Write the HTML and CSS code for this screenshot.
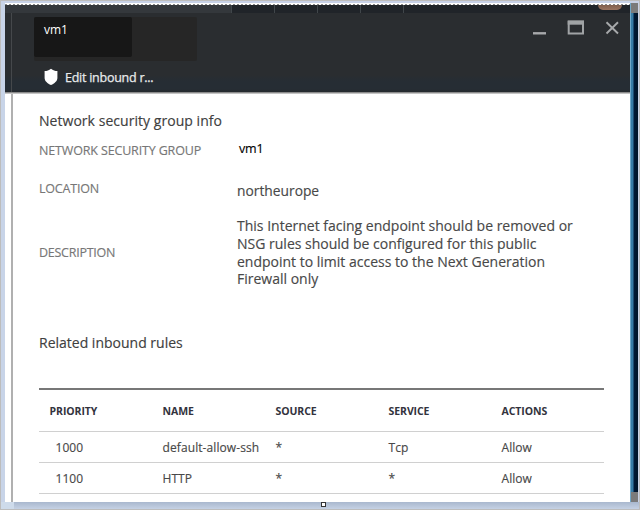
FILE: index.html
```html
<!DOCTYPE html>
<html lang="en">
<head>
<meta charset="utf-8">
<title>Network security group</title>
<link rel="stylesheet" href="styles.css">
</head>
<body>
<div class="window">
  <div class="rail-left"></div>
  <div class="blade">
    <div class="dots"></div>
    <header class="header">
      <div class="tabs"><i class="wide"></i><i></i><i></i><i></i><i></i></div>
      <div class="avatar"></div>
      <div class="title-row">
        <div class="title-box"><div class="title">vm1</div></div>
        <svg class="controls" width="90" height="20" viewBox="0 0 90 20">
          <path d="M1 14.3H14" stroke="#a7a9ab" stroke-width="2.4"/>
          <path d="M36.7 2.5H51V14.4H36.7Z" fill="none" stroke="#a0a3a5" stroke-width="2"/>
          <path d="M35.7 3.7H52" stroke="#a0a3a5" stroke-width="4"/>
          <path d="M74.5 3.3L86 14.5M86 3.3L74.5 14.5" stroke="#a7a9ab" stroke-width="1.9"/>
        </svg>
      </div>
      <div class="toolbar">
        <svg width="14" height="18" viewBox="0 0 14 18"><path d="M7 .7C9 2.2 11 3 13.4 3.1V10C13.4 13 10.5 15.5 7 17C3.5 15.5.6 13 .6 10V3.1C3 3 5 2.2 7 .7Z" fill="#fff"/></svg>
        <span>Edit inbound r...</span>
      </div>
    </header>
    <main class="content">
      <h2 class="info">Network security group info</h2>
      <div class="row first"><span class="label">NETWORK SECURITY GROUP</span><span class="vm">vm1</span></div>
      <div class="row second"><span class="label">LOCATION</span><span class="value">northeurope</span></div>
      <div class="row third"><span class="label short">DESCRIPTION</span>
        <p class="value">This Internet facing endpoint should be removed or<br>NSG rules should be configured for this public<br>endpoint to limit access to the Next Generation<br>Firewall only</p></div>
      <h2 class="rules">Related inbound rules</h2>
      <div class="table">
        <div class="tr th"><span>PRIORITY</span><span>NAME</span><span>SOURCE</span><span>SERVICE</span><span>ACTIONS</span></div>
        <div class="tr"><span class="num">1000</span><span class="ssh">default-allow-ssh</span><span>*</span><span>Tcp</span><span>Allow</span></div>
        <div class="tr"><span class="num">1100</span><span>HTTP</span><span>*</span><span>*</span><span>Allow</span></div>
      </div>
    </main>
  </div>
  <div class="rail-right"><i></i><i></i></div>
  <div class="bottom"><span class="handle"></span></div>
</div>
</body>
</html>
```
FILE: styles.css
```css
* { box-sizing: border-box; }
body { margin: 0; background: #bfbfbf; font-family: "Open Sans", "Noto Sans", sans-serif; color: #484848; }
.window { width: 640px; height: 510px; border: 1px solid #bdbdbd; display: grid; grid-template-columns: 4px 625px 8px 1fr; grid-template-rows: 2px 499px 1fr; background: #c8d2e7; overflow: hidden; }
.rail-left { grid-area: 2 / 1; background: #c8d4e8; }
.blade { grid-area: 2 / 2; background: #fff; position: relative; }
.blade::after { content: ""; position: absolute; left: 6px; top: 91px; bottom: 0; width: 2px; background: #b0b0b0; }
.dots { height: 2px; background: repeating-linear-gradient(90deg, #888 0 2px, #fff 2px 4px) bottom / 100% 1px no-repeat; }
.header { height: 89px; background: linear-gradient(#2a2d30 0 70px, #262d34 76px 84px, #252a2e 87px, #8b8b8b 87px 88px, #c4c4c4 88px); position: relative; }
.header::before { content: ""; position: absolute; left: 6px; top: 8px; width: 1px; height: 79px; background: #45484b; }
.tabs { display: flex; height: 8px; background: #202429; }
.tabs i { width: 43px; border-right: 1px solid #40464a; }
.tabs .wide { width: 227px; background: #34383c; }
.avatar { position: absolute; right: 8px; top: 0; width: 24px; height: 5px; background: linear-gradient(#80604f, #99735f); border-radius: 0 0 12px 12px; }
.title-row { display: flex; justify-content: space-between; padding: 4px 8px 0 29px; height: 49px; }
.title-box { width: 163px; height: 44px; background: #262626; border-radius: 2px; }
.title { width: 98px; height: 40px; background: #171717; border-radius: 2px; padding: 4px 0 0 10px; font-size: 12px; line-height: 18px; color: #fff; }
.controls { margin-top: 2px; }
.toolbar { display: flex; align-items: center; height: 20px; margin-top: 6px; padding-left: 39px; gap: 7px; font-size: 12.5px; line-height: 20px; letter-spacing: -.25px; color: #e8eaeb; -webkit-text-stroke: .25px #e8eaeb; }
.toolbar svg { margin-top: -2px; }
.content { padding: 17px 27px 0 34px; -webkit-text-stroke: .15px; }
h2 { margin: 0; font-size: 14px; line-height: 20px; font-weight: 400; color: #404040; white-space: nowrap; }
.info { letter-spacing: .04px; }
.row { display: grid; grid-template-columns: 198px 1fr; white-space: nowrap; }
.label { font-size: 12.5px; line-height: 20px; color: #777; letter-spacing: -.15px; }
.label.short { letter-spacing: -.25px; }
.value { margin: 0; font-size: 14px; line-height: 17.8px; color: #484848; }
.first { padding-top: 10px; height: 48px; }
.second { height: 38px; }
.second .label { letter-spacing: -.2px; }
.second .value { padding-top: 3px; font-size: 13.8px; }
.third { height: 71px; align-items: center; }
.vm { font-size: 12.5px; line-height: 16px; color: #000; padding-left: 2px; letter-spacing: -.2px; }
.rules { margin-top: 45px; }
.table { margin-top: 35px; border-top: 2px solid #777; width: 565px; }
.tr { display: grid; grid-template-columns: repeat(5, 113px); height: 31px; border-bottom: 1px solid #d0d0d0; font-size: 12px; line-height: 32px; padding-left: 10.6px; }
.tr > span { white-space: nowrap; }
.th { height: 42px; font-size: 10.5px; line-height: 42px; font-weight: 700; color: #33333d; -webkit-text-stroke: 0; letter-spacing: -.1px; }
.num { padding-left: 6px; }
.ssh { letter-spacing: .08px; }
.rail-right { grid-area: 2 / 3; background: linear-gradient(90deg, #70a8c8 0 1px, #387ca6 1px 3px, #021a38 4px, #001426); display: flex; flex-direction: column; justify-content: space-between; }
.rail-right i { height: 10px; background: #7b7b7b; margin-left: 1px; }
.bottom { grid-area: 3 / 1 / 4 / 5; background: linear-gradient(90deg, #cedbeb 13px, transparent 13px), linear-gradient(#a9b8ce, #c5d1e4); position: relative; }
.handle { position: absolute; left: 320px; top: 0; width: 5px; height: 5px; border: 1px solid #333; background: #fff; }
```
